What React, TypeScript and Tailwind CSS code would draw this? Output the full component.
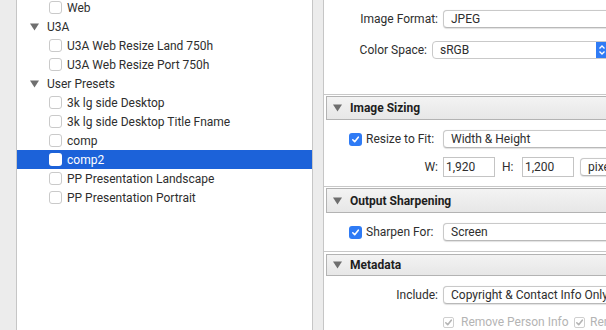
import React from "react";

const Triangle = ({ className = "" }: { className?: string }) => (
  <svg width="9" height="8" viewBox="0 0 9 8" className={className}>
    <polygon points="0,0.5 9,0.5 4.5,7.5" fill="currentColor" />
  </svg>
);

const Check = ({ color = "white" }: { color?: string }) => (
  <svg width="9" height="9" viewBox="0 0 9 9">
    <path d="M1.8 4.8 L3.7 6.7 L7.3 2.2" fill="none" stroke={color} strokeWidth="1.6" strokeLinecap="round" strokeLinejoin="round" />
  </svg>
);

const BlueBox = () => (
  <div className="w-[13px] h-[13px] rounded-[3px] bg-[#2f7bf5] flex items-center justify-center shrink-0">
    <Check />
  </div>
);

const Popup = ({ text, w, className = "" }: { text: string; w: string; className?: string }) => (
  <div
    className={`h-[18px] ${w} shrink-0 bg-white border border-[#c9c9c9] border-b-[#b9b9b9] rounded-[4px] shadow-[0_0.5px_1px_rgba(0,0,0,0.12)] flex items-center pl-[7px] whitespace-nowrap overflow-hidden ${className}`}
  >
    {text}
  </div>
);

const SectionHeader = ({ title, h = "h-[24px]" }: { title: string; h?: string }) => (
  <div
    className={`ml-[2px] ${h} w-[300px] shrink-0 border border-[#b3b3b3] bg-gradient-to-b from-[#f3f3f3] to-[#e7e7e7] flex items-center pl-[6px] gap-[8px] font-bold text-[#1e1e1e]`}
  >
    <Triangle className="text-[#6e6e6e]" />
    <span>{title}</span>
  </div>
);

const Line = ({ mt }: { mt: string }) => <div className={`${mt} h-px w-full bg-[#c8c8c8] shrink-0`} />;

type Row = { kind: "group" | "item"; label: string; selected?: boolean };

const rows: Row[] = [
  { kind: "item", label: "Web" },
  { kind: "group", label: "U3A" },
  { kind: "item", label: "U3A Web Resize Land 750h" },
  { kind: "item", label: "U3A Web Resize Port 750h" },
  { kind: "group", label: "User Presets" },
  { kind: "item", label: "3k lg side Desktop" },
  { kind: "item", label: "3k lg side Desktop Title Fname" },
  { kind: "item", label: "comp" },
  { kind: "item", label: "comp2", selected: true },
  { kind: "item", label: "PP Presentation Landscape" },
  { kind: "item", label: "PP Presentation Portrait" },
];

export default function App() {
  return (
    <div className="w-[606px] h-[330px] overflow-hidden flex bg-[#ececec] font-['Roboto',sans-serif] text-[12px] text-[#2e2e2e]">
      <div className="w-[16px] shrink-0" />

      {/* preset list */}
      <div className="w-[297px] shrink-0 bg-white border-l border-r border-[#c6c6c6] overflow-hidden">
        <div className="mt-[-2px]">
          {rows.map((r) =>
            r.kind === "group" ? (
              <div key={r.label} className="h-[19px] flex items-center pl-[13px] gap-[8px]">
                <Triangle className="text-[#6f6f6f]" />
                <span>{r.label}</span>
              </div>
            ) : (
              <div
                key={r.label}
                className={`h-[19px] flex items-center pl-[32px] gap-[5px] ${r.selected ? "bg-[#1c62d9] text-white" : ""}`}
              >
                <div
                  className={`w-[13px] h-[13px] rounded-[3px] shrink-0 ${r.selected ? "bg-white" : "bg-white border border-[#cacaca]"}`}
                />
                <span>{r.label}</span>
              </div>
            )
          )}
        </div>
      </div>

      <div className="w-[10px] shrink-0" />

      {/* export settings */}
      <div className="flex-1 bg-white border-l border-[#c6c6c6] overflow-hidden flex flex-col">
        <div className="mt-[10px] flex items-center">
          <div className="w-[114px] text-right shrink-0">Image Format:</div>
          <Popup text="JPEG" w="w-[200px]" className="ml-[5px]" />
        </div>

        <div className="mt-[13px] flex items-center">
          <div className="w-[103px] text-right shrink-0">Color Space:</div>
          <div className="ml-[5px] h-[18px] w-[190px] shrink-0 bg-white border border-[#c9c9c9] rounded-[4px] flex items-center overflow-hidden">
            <span className="pl-[7px] flex-1">sRGB</span>
            <div className="w-[25px] h-full bg-[#2f7bf5] flex items-center pl-[2px]">
              <svg width="8" height="12" viewBox="0 0 8 12">
                <path d="M1.5 4.5 L4 2 L6.5 4.5 M1.5 7.5 L4 10 L6.5 7.5" fill="none" stroke="white" strokeWidth="1.3" />
              </svg>
            </div>
          </div>
        </div>

        <Line mt="mt-[35px]" />
        <div className="mt-px" />
        <SectionHeader title="Image Sizing" />

        <div className="mt-[10px] flex items-center pl-[25px]">
          <BlueBox />
          <div className="ml-[4px] w-[72px] shrink-0">Resize to Fit:</div>
          <Popup text="Width & Height" w="w-[200px]" className="ml-[5px]" />
        </div>

        <div className="mt-[9px] flex items-center">
          <div className="w-[114px] text-right shrink-0">W:</div>
          <div className="ml-[5px] h-[20px] w-[52px] shrink-0 border border-[#c4c4c4] flex items-center pl-[2px]">1,920</div>
          <div className="ml-[7px] w-[13px] shrink-0">H:</div>
          <div className="ml-[7px] h-[20px] w-[52px] shrink-0 border border-[#c4c4c4] flex items-center pl-[2px]">1,200</div>
          <Popup text="pixels" w="w-[80px]" className="ml-[6px]" />
        </div>

        <Line mt="mt-[9px]" />
        <div className="mt-px" />
        <SectionHeader title="Output Sharpening" h="h-[25px]" />

        <div className="mt-[10px] flex items-center pl-[25px]">
          <BlueBox />
          <div className="ml-[4px] w-[72px] shrink-0">Sharpen For:</div>
          <Popup text="Screen" w="w-[200px]" className="ml-[5px]" />
        </div>

        <Line mt="mt-[10px]" />
        <div className="mt-[2px]" />
        <SectionHeader title="Metadata" h="h-[22px]" />

        <div className="mt-[10px] flex items-center">
          <div className="w-[114px] text-right shrink-0">Include:</div>
          <Popup text="Copyright & Contact Info Only" w="w-[200px]" className="ml-[5px]" />
        </div>

        <div className="mt-[9px] flex items-center pl-[119px] text-[#b4b4b4] whitespace-nowrap">
          <div className="w-[11px] h-[11px] rounded-[2px] border border-[#cfcfcf] flex items-center justify-center shrink-0">
            <Check color="#b4b4b4" />
          </div>
          <span className="ml-[7px] w-[113px] shrink-0">Remove Person Info</span>
          <div className="w-[11px] h-[11px] rounded-[2px] border border-[#cfcfcf] flex items-center justify-center shrink-0">
            <Check color="#b4b4b4" />
          </div>
          <span className="ml-[5px]">Remove Location Info</span>
        </div>
      </div>
    </div>
  );
}
